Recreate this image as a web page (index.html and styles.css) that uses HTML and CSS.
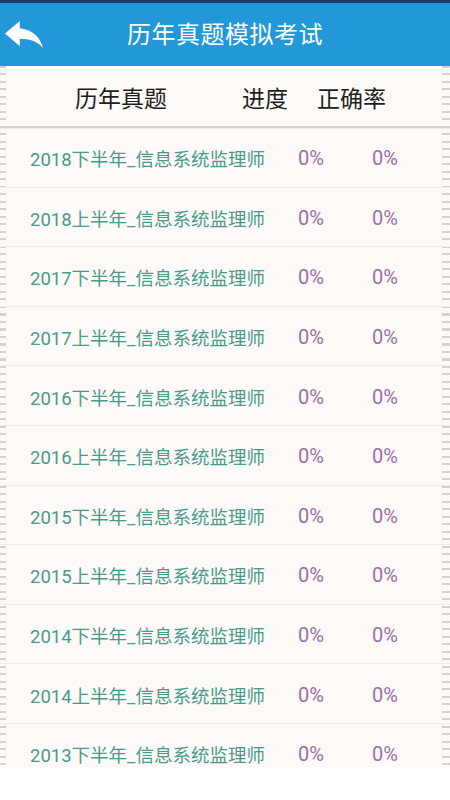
FILE: index.html
```html
<!DOCTYPE html>
<html lang="zh">
<head>
<meta charset="utf-8">
<title>历年真题模拟考试</title>
<link rel="stylesheet" href="styles.css">
</head>
<body>
<div class="statusbar"></div>
<header class="appbar">
  <svg class="back" viewBox="3 5 18 15" preserveAspectRatio="none" aria-hidden="true">
    <path d="M10 9V5l-7 7 7 7v-4.1c5 0 8.5 1.6 11 5.1-1-5-4-10-11-11z" fill="#fff"/>
  </svg>
  <h1 class="title">历年真题模拟考试</h1>
</header>
<main class="paper">
  <div class="head">
    <span class="h-name">历年真题</span>
    <span class="h-prog">进度</span>
    <span class="h-rate">正确率</span>
  </div>
  <ul class="list">
    <li class="row"><span class="name">2018下半年_信息系统监理师</span><span class="pct">0%</span><span class="pct">0%</span></li>
    <li class="row"><span class="name">2018上半年_信息系统监理师</span><span class="pct">0%</span><span class="pct">0%</span></li>
    <li class="row"><span class="name">2017下半年_信息系统监理师</span><span class="pct">0%</span><span class="pct">0%</span></li>
    <li class="row"><span class="name">2017上半年_信息系统监理师</span><span class="pct">0%</span><span class="pct">0%</span></li>
    <li class="row"><span class="name">2016下半年_信息系统监理师</span><span class="pct">0%</span><span class="pct">0%</span></li>
    <li class="row"><span class="name">2016上半年_信息系统监理师</span><span class="pct">0%</span><span class="pct">0%</span></li>
    <li class="row"><span class="name">2015下半年_信息系统监理师</span><span class="pct">0%</span><span class="pct">0%</span></li>
    <li class="row"><span class="name">2015上半年_信息系统监理师</span><span class="pct">0%</span><span class="pct">0%</span></li>
    <li class="row"><span class="name">2014下半年_信息系统监理师</span><span class="pct">0%</span><span class="pct">0%</span></li>
    <li class="row"><span class="name">2014上半年_信息系统监理师</span><span class="pct">0%</span><span class="pct">0%</span></li>
    <li class="row"><span class="name">2013下半年_信息系统监理师</span><span class="pct">0%</span><span class="pct">0%</span></li>
  </ul>
</main>
</body>
</html>
```
FILE: styles.css
```css
* { box-sizing: border-box; }
html, body {
  margin: 0;
  padding: 0;
  background: #ffffff;
  font-family: Roboto, "Noto Sans CJK SC", sans-serif;
  width: 450px;
  height: 800px;
  overflow: hidden;
}
.statusbar {
  height: 3px;
  background: #1b3c6e;
}
.appbar {
  position: relative;
  height: 63px;
  background: #2398d8;
  display: flex;
  align-items: center;
  justify-content: center;
}
.back {
  position: absolute;
  left: 5px;
  top: 18px;
  width: 38px;
  height: 27px;
}
.title {
  margin: 0;
  color: #ffffff;
  font-family: "Noto Sans CJK SC", sans-serif;
  font-weight: 400;
  font-size: 24px;
  letter-spacing: 0.5px;
  line-height: 1;
  padding-bottom: 3px;
}
.paper {
  height: 701px;
  overflow: hidden;
  background-color: #fdfaf7;
  background-image:
    repeating-linear-gradient(to bottom, #d6d2ce 0, #d6d2ce 2px, transparent 2px, transparent 7.5px),
    repeating-linear-gradient(to bottom, #d6d2ce 0, #d6d2ce 2px, transparent 2px, transparent 7.5px);
  background-size: 6px 100%, 8px 100%;
  background-position: left top, right top;
  background-repeat: no-repeat;
}
.head {
  height: 62px;
  display: grid;
  grid-template-columns: 242px 75px auto;
  align-items: center;
  border-bottom: 2px solid #d3d0cd;
  box-shadow: 0 1px 1px rgba(0,0,0,0.06);
  font-family: "Noto Sans CJK SC", sans-serif;
  font-size: 23px;
  color: #1e1e1e;
  padding-top: 2px;
}
.h-name { text-align: center; }
.list {
  list-style: none;
  margin: 0;
  padding: 0;
}
.row {
  height: 59.6px;
  display: grid;
  grid-template-columns: 268px 74px auto;
  align-items: center;
  padding-left: 30px;
  padding-top: 2px;
  border-bottom: 1px solid #f1ede8;
  font-size: 20px;
}
.name {
  color: #469b8b;
  white-space: nowrap;
  font-size: 18.5px;
}
.pct {
  color: #9b6ea8;
}
```
